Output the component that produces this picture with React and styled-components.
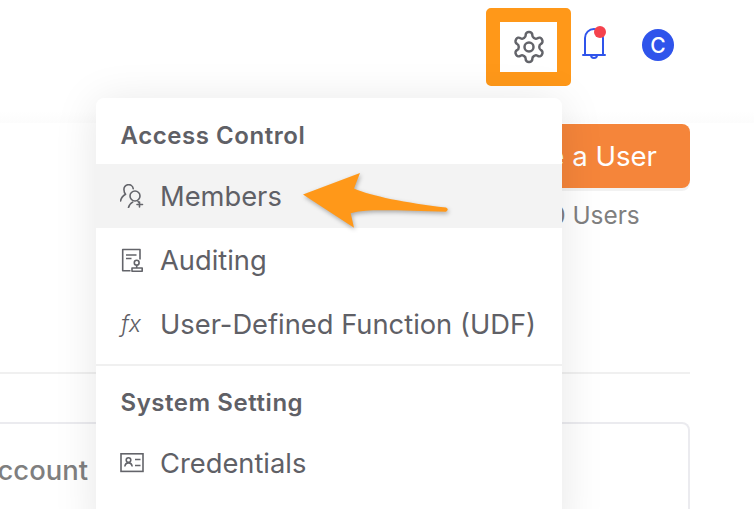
import React from "react";
import styled, { createGlobalStyle } from "styled-components";

const GlobalStyle = createGlobalStyle`
  html, body {
    margin: 0;
    padding: 0;
    background: #fff;
    font-family: Inter, "Liberation Sans", sans-serif;
  }
`;

const GearIcon = () => (
  <svg width="36" height="36" viewBox="0 0 24 24" fill="none" stroke="#63646a" strokeWidth="1.65" strokeLinecap="round" strokeLinejoin="round">
    <path d="M12.22 2h-.44a2 2 0 0 0-2 2v.18a2 2 0 0 1-1 1.73l-.43.25a2 2 0 0 1-2 0l-.15-.08a2 2 0 0 0-2.73.73l-.22.38a2 2 0 0 0 .73 2.73l.15.1a2 2 0 0 1 1 1.72v.51a2 2 0 0 1-1 1.74l-.15.09a2 2 0 0 0-.73 2.73l.22.38a2 2 0 0 0 2.73.73l.15-.08a2 2 0 0 1 2 0l.43.25a2 2 0 0 1 1 1.73V20a2 2 0 0 0 2 2h.44a2 2 0 0 0 2-2v-.18a2 2 0 0 1 1-1.73l.43-.25a2 2 0 0 1 2 0l.15.08a2 2 0 0 0 2.73-.73l.22-.39a2 2 0 0 0-.73-2.73l-.15-.08a2 2 0 0 1-1-1.74v-.5a2 2 0 0 1 1-1.74l.15-.09a2 2 0 0 0 .73-2.73l-.22-.38a2 2 0 0 0-2.73-.73l-.15.08a2 2 0 0 1-2 0l-.43-.25a2 2 0 0 1-1-1.73V4a2 2 0 0 0-2-2z" />
    <circle cx="12" cy="12" r="3" />
  </svg>
);

const BellIcon = () => (
  <svg width="26" height="36" viewBox="0 0 26 36" fill="none" stroke="#2f54eb" strokeWidth="2" strokeLinecap="round" strokeLinejoin="round">
    <path d="M2 29h22" />
    <path d="M4 29V12a9 9 0 0 1 18 0v17" />
    <path d="M10 29a3 3 0 0 0 6 0" />
  </svg>
);

const MembersIcon = () => (
  <svg width="24" height="24" viewBox="0 0 24 24" fill="none" stroke="#63646a" strokeWidth="1.6" strokeLinecap="round" strokeLinejoin="round">
    <circle cx="15" cy="12" r="5" />
    <path d="M8.5 23.5c.6-2.5 2.2-4.4 4.2-5.4" />
    <path d="M18 17.5l1 1" />
    <path d="M13.2 4.6A4.6 4.6 0 0 0 4 6c0 1.8.6 3.2 1.6 4.2C3 11.6 1 14 .6 17" />
    <path d="M19.5 18v5M17 20.5h5.5" />
  </svg>
);

const AuditIcon = () => (
  <svg width="24" height="24" viewBox="0 0 24 24" fill="none" stroke="#63646a" strokeWidth="1.6" strokeLinejoin="round">
    <path d="M10.5 22.7H2.7V1.5H20v10" />
    <path d="M6 7h10.5M6 10.5h5.5" />
    <circle cx="16.7" cy="14.7" r="2.4" />
    <path d="M16.7 17.1V20M12 20h10.2v3.2H12z" />
  </svg>
);

const CredentialIcon = () => (
  <svg width="24" height="24" viewBox="0 0 24 24" fill="none" stroke="#63646a" strokeWidth="1.6">
    <rect x="1" y="2.8" width="22" height="17.6" />
    <circle cx="8.5" cy="9" r="2.3" />
    <path d="M4.8 15.5c.3-2 1.8-3.6 3.7-3.6s3.4 1.6 3.7 3.6M15 8.5h5.5M15 14.5h5.5" />
  </svg>
);

const App = () => {
  return (
    <Page>
      <GlobalStyle />
      <Header>
        <GearBox>
          <GearIcon />
        </GearBox>
        <BellWrap>
          <BellIcon />
          <Dot />
        </BellWrap>
        <Avatar>C</Avatar>
      </Header>
      <Content>
        <Actions>
          <CreateButton>Create a User</CreateButton>
          <UserCount>10 Users</UserCount>
        </Actions>
        <Divider />
        <AccountCard>
          <AccountLabel>Account</AccountLabel>
        </AccountCard>
      </Content>
      <Menu>
        <MenuTitle>Access Control</MenuTitle>
        <MenuItem $active>
          <IconSlot><MembersIcon /></IconSlot>
          Members
        </MenuItem>
        <MenuItem>
          <IconSlot><AuditIcon /></IconSlot>
          Auditing
        </MenuItem>
        <MenuItem>
          <IconSlot><FxGlyph>fx</FxGlyph></IconSlot>
          User-Defined Function (UDF)
        </MenuItem>
        <MenuDivider />
        <MenuTitle>System Setting</MenuTitle>
        <MenuItem>
          <IconSlot><CredentialIcon /></IconSlot>
          Credentials
        </MenuItem>
      </Menu>
      <Arrow width="160" height="70" viewBox="0 0 160 70">
        <path
          d="M7 29.5 L64 8 L58 23.5 C75 31 110 38 150 42.5 Q153.5 44.5 150 46.7 C120 46 85 44.5 70 45.7 Q62 46 54.7 48.3 L58 62.7 Z"
          fill="#ff9819"
        />
      </Arrow>
    </Page>
  );
};

const Page = styled.div`
  position: relative;
  width: 754px;
  height: 509px;
  overflow: hidden;
  background: #fff;
`;

const Header = styled.div`
  height: 123px;
  box-sizing: border-box;
  padding: 8px 80px 0 0;
  display: flex;
  justify-content: flex-end;
  align-items: flex-start;
  background: linear-gradient(to bottom, #fff 90%, #fcfcfc);
`;

const GearBox = styled.div`
  width: 85px;
  height: 78px;
  box-sizing: border-box;
  border: 14px solid #ff9819;
  border-radius: 5px;
  display: flex;
  align-items: center;
  justify-content: center;
`;

const BellWrap = styled.div`
  position: relative;
  display: flex;
  margin: 18px 0 0 10px;
`;

const Dot = styled.span`
  position: absolute;
  top: 0;
  right: 1px;
  width: 12px;
  height: 12px;
  border-radius: 50%;
  background: #f5424d;
`;

const Avatar = styled.div`
  width: 32px;
  height: 32px;
  margin: 21px 0 0 35px;
  border-radius: 50%;
  background: #2f54eb;
  color: #fff;
  font-size: 21px;
  font-weight: 500;
  display: flex;
  align-items: center;
  justify-content: center;
`;

const Content = styled.div`
  padding-right: 64px;
  display: flex;
  flex-direction: column;
  align-items: flex-end;
`;

const Actions = styled.div`
  width: 200px;
  height: 249px;
  display: flex;
  flex-direction: column;
  align-items: center;
`;

const CreateButton = styled.div`
  width: 100%;
  height: 64px;
  margin-top: 1px;
  border-radius: 8px;
  background: #f5853a;
  box-shadow: 0 3px 0 rgba(0, 0, 0, 0.05);
  color: #fff;
  font-size: 27.6px;
  line-height: 64px;
  white-space: nowrap;
  display: flex;
  justify-content: flex-end;
  padding-right: 33px;
  box-sizing: border-box;
`;

const UserCount = styled.div`
  margin-top: 13px;
  font-size: 24.4px;
  line-height: 28px;
  color: #7f7f7f;
`;

const Divider = styled.div`
  align-self: stretch;
  height: 2px;
  background: #f0f0f0;
`;

const AccountCard = styled.div`
  align-self: stretch;
  height: 150px;
  margin-top: 48px;
  border: 2px solid #ebebef;
  border-left: 0;
  border-radius: 0 8px 8px 0;
  padding-top: 28px;
  box-sizing: border-box;
`;

const AccountLabel = styled.div`
  width: 88px;
  direction: rtl;
  overflow: hidden;
  white-space: nowrap;
  font-size: 27.4px;
  font-weight: 500;
  line-height: 36px;
  color: #7f7f7f;
`;

const Menu = styled.div`
  position: absolute;
  top: 98px;
  left: 96px;
  width: 466px;
  height: 440px;
  padding-top: 16px;
  box-sizing: border-box;
  background: #fff;
  border-radius: 8px;
  box-shadow: 0 4px 44px rgba(0, 0, 0, 0.1);
`;

const MenuTitle = styled.div`
  height: 50px;
  padding-left: 24.5px;
  font-size: 24px;
  font-weight: 600;
  letter-spacing: 0.55px;
  line-height: 44px;
  color: #5f6066;
`;

const MenuItem = styled.div`
  height: 64px;
  padding-left: 24px;
  display: flex;
  align-items: center;
  font-size: 27.3px;
  color: #5f6066;
  white-space: nowrap;
  background: ${(p) => (p.$active ? "#f3f3f3" : "transparent")};
`;

const IconSlot = styled.span`
  width: 24px;
  height: 24px;
  margin-right: 16px;
  display: flex;
  align-items: center;
  justify-content: center;
`;

const FxGlyph = styled.span`
  font-style: italic;
  font-weight: 300;
  font-size: 23px;
  margin-left: -2px;
`;

const MenuDivider = styled.div`
  height: 2px;
  margin: 8px 0 15px;
  background: #f0f0f0;
`;

const Arrow = styled.svg`
  position: absolute;
  top: 165px;
  left: 296px;
  filter: drop-shadow(1px 2px 2px rgba(0, 0, 0, 0.3));
`;

export default App;
